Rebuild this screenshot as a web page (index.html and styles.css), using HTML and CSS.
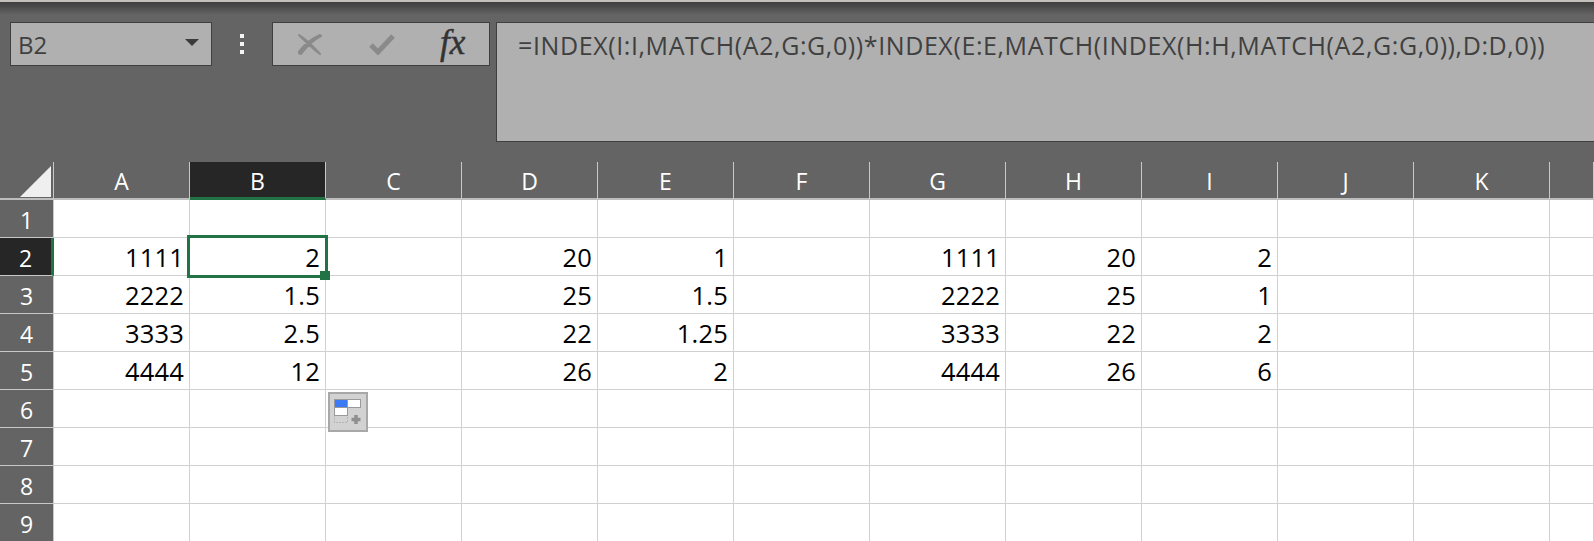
FILE: index.html
```html
<!DOCTYPE html>
<html lang="en">
<head>
<meta charset="utf-8">
<title>Excel formula</title>
<link rel="stylesheet" href="styles.css">
</head>
<body>
<div class="app">
  <header class="toolbar">
    <div class="namebox">
      <span class="name">B2</span>
      <span class="caret"></span>
    </div>
    <div class="dots"><i></i><i></i><i></i></div>
    <div class="fnbox">
      <svg class="ic ic-x" width="24" height="22" viewBox="0 0 24 22"><path d="M1 2 C8 6 16 14 22 21 C15 16 8 9 1 2Z M22 2 C15 5 6 12 0 20 L3 21 C9 13 15 7 23 3Z" fill="#8a8a8a" stroke="#8a8a8a" stroke-width="2" stroke-linejoin="round"/></svg>
      <svg class="ic ic-c" width="26" height="22" viewBox="0 0 26 22"><path d="M2 12 L9 19 L24 3" fill="none" stroke="#8a8a8a" stroke-width="5" stroke-linejoin="miter"/></svg>
      <span class="fx">fx</span>
    </div>
    <div class="formula">=INDEX(I:I,MATCH(A2,G:G,0))*INDEX(E:E,MATCH(INDEX(H:H,MATCH(A2,G:G,0)),D:D,0))</div>
  </header>
  <main class="sheet">
    <div class="corner"><svg width="32" height="32" viewBox="0 0 32 32"><path d="M0 31 L31 0 V31Z" fill="#efefef"/></svg></div>
    <div class="ch">A</div><div class="ch on">B</div><div class="ch">C</div><div class="ch">D</div><div class="ch">E</div><div class="ch">F</div><div class="ch">G</div><div class="ch">H</div><div class="ch">I</div><div class="ch">J</div><div class="ch">K</div><div class="ch"></div>

    <div class="rh">1</div><div class="c"></div><div class="c"></div><div class="c"></div><div class="c"></div><div class="c"></div><div class="c"></div><div class="c"></div><div class="c"></div><div class="c"></div><div class="c"></div><div class="c"></div><div class="c"></div>

    <div class="rh on">2</div><div class="c">1111</div><div class="c sel">2<span class="handle"></span></div><div class="c"></div><div class="c">20</div><div class="c">1</div><div class="c"></div><div class="c">1111</div><div class="c">20</div><div class="c">2</div><div class="c"></div><div class="c"></div><div class="c"></div>

    <div class="rh">3</div><div class="c">2222</div><div class="c">1.5</div><div class="c"></div><div class="c">25</div><div class="c">1.5</div><div class="c"></div><div class="c">2222</div><div class="c">25</div><div class="c">1</div><div class="c"></div><div class="c"></div><div class="c"></div>

    <div class="rh">4</div><div class="c">3333</div><div class="c">2.5</div><div class="c"></div><div class="c">22</div><div class="c">1.25</div><div class="c"></div><div class="c">3333</div><div class="c">22</div><div class="c">2</div><div class="c"></div><div class="c"></div><div class="c"></div>

    <div class="rh">5</div><div class="c">4444</div><div class="c">12<span class="autofill"><svg width="30" height="30" viewBox="0 0 30 30"><rect x="1.5" y="1.5" width="13" height="8" fill="#3d7bf5" stroke="#9a9a9a"/><rect x="14.5" y="1.5" width="13" height="8" fill="#fff" stroke="#9a9a9a"/><rect x="1.5" y="9.5" width="13" height="8" fill="#fff" stroke="#9a9a9a"/><rect x="1.5" y="17.5" width="13" height="7" fill="none" stroke="#9a9a9a" stroke-dasharray="1 2"/><path d="M23 17v9M18.5 21.5h9" stroke="#8f8f8f" stroke-width="3.5"/></svg></span></div><div class="c"></div><div class="c">26</div><div class="c">2</div><div class="c"></div><div class="c">4444</div><div class="c">26</div><div class="c">6</div><div class="c"></div><div class="c"></div><div class="c"></div>

    <div class="rh">6</div><div class="c"></div><div class="c"></div><div class="c"></div><div class="c"></div><div class="c"></div><div class="c"></div><div class="c"></div><div class="c"></div><div class="c"></div><div class="c"></div><div class="c"></div><div class="c"></div>

    <div class="rh">7</div><div class="c"></div><div class="c"></div><div class="c"></div><div class="c"></div><div class="c"></div><div class="c"></div><div class="c"></div><div class="c"></div><div class="c"></div><div class="c"></div><div class="c"></div><div class="c"></div>

    <div class="rh">8</div><div class="c"></div><div class="c"></div><div class="c"></div><div class="c"></div><div class="c"></div><div class="c"></div><div class="c"></div><div class="c"></div><div class="c"></div><div class="c"></div><div class="c"></div><div class="c"></div>

    <div class="rh">9</div><div class="c"></div><div class="c"></div><div class="c"></div><div class="c"></div><div class="c"></div><div class="c"></div><div class="c"></div><div class="c"></div><div class="c"></div><div class="c"></div><div class="c"></div><div class="c"></div>
  </main>
</div>
</body>
</html>
```
FILE: styles.css
```css
*, *::before, *::after { box-sizing: border-box; }
html, body { margin: 0; height: 100%; overflow: hidden; background: #fff; }
body { font-family: "Open Sans", "Noto Sans", sans-serif; }
.app { width: 1594px; height: 541px; overflow: hidden; }

.toolbar {
  height: 162px;
  display: flex;
  align-items: flex-start;
  padding: 22px 0 0 10px;
  background: linear-gradient(#c4c0bc 0, #c4c0bc 2px, #3e3e3e 2px, #646464 15px);
  background-color: #646464;
}
.namebox {
  width: 202px;
  height: 44px;
  display: flex;
  align-items: center;
  justify-content: space-between;
  padding: 0 12px 0 7px;
  background: #b0b0b0;
  border: 1px solid #3f3f3f;
  color: #404040;
  font-size: 24px;
}
.caret {
  width: 0;
  height: 0;
  border-left: 7.5px solid transparent;
  border-right: 7.5px solid transparent;
  border-top: 7px solid #3a3a3a;
  margin-top: -4px;
}
.dots {
  width: 60px;
  height: 44px;
  display: flex;
  flex-direction: column;
  align-items: center;
  gap: 4px;
  padding-top: 12px;
}
.dots i { display: block; width: 4px; height: 4px; background: #f4f4f4; }
.fnbox {
  width: 218px;
  height: 44px;
  display: flex;
  align-items: center;
  background: #b0b0b0;
  border: 1px solid #3f3f3f;
  padding-left: 25px;
}
.ic-c { margin-left: 47px; }
.fx {
  margin-left: 45px;
  margin-top: -2px;
  font-family: "Liberation Serif", serif;
  font-style: italic;
  font-size: 35px;
  line-height: 40px;
  color: #333;
  -webkit-text-stroke: 0.5px #333;
}
.formula {
  flex: 1;
  height: 120px;
  margin-left: 6px;
  padding: 7px 0 0 21px;
  background: #b0b0b0;
  border: 1px solid #3f3f3f;
  border-right: 0;
  color: #404040;
  font-size: 25px;
  letter-spacing: 0.6px;
  line-height: 30px;
  white-space: nowrap;
}

.sheet {
  display: grid;
  grid-template-columns: 54px repeat(11, 136px) 44px;
  grid-auto-rows: 38px;
}
.corner {
  background: #646464;
  border-right: 1px solid #c8c8c8;
  border-bottom: 2px solid #bdbdbd;
  padding: 4px 0 0 20px;
}
.corner svg { display: block; }
.ch, .rh {
  display: flex;
  align-items: center;
  justify-content: center;
  padding-top: 2px;
  background: #646464;
  color: #fff;
  font-size: 23px;
}
.ch { border-right: 1px solid #c8c8c8; border-bottom: 2px solid #bdbdbd; }
.rh { border-right: 1px solid #c8c8c8; border-bottom: 1px solid #c8c8c8; }
.ch.on { background: #262626; border-bottom: 3px solid #217346; }
.rh.on { background: #262626; border-right: 3px solid #217346; }
.c {
  position: relative;
  display: flex;
  align-items: center;
  justify-content: flex-end;
  padding: 0 5px 0 0;
  background: #fff;
  border-right: 1px solid #d0d0d0;
  border-bottom: 1px solid #d0d0d0;
  color: #000;
  font-size: 25.5px;
  letter-spacing: 0.2px;
}
.sel { z-index: 3; }
.sel::before {
  content: "";
  position: absolute;
  left: -3px;
  top: -3px;
  width: 141px;
  height: 43px;
  border: 3px solid #217346;
}
.handle {
  position: absolute;
  left: 130px;
  top: 33px;
  width: 10px;
  height: 9px;
  background: #217346;
}
.autofill {
  position: absolute;
  left: 138px;
  top: 40px;
  width: 40px;
  height: 40px;
  background: #d2d2d2;
  border: 2px solid #a8a8a8;
  padding: 4px 3px;
  z-index: 2;
}
.autofill svg { display: block; }
```
